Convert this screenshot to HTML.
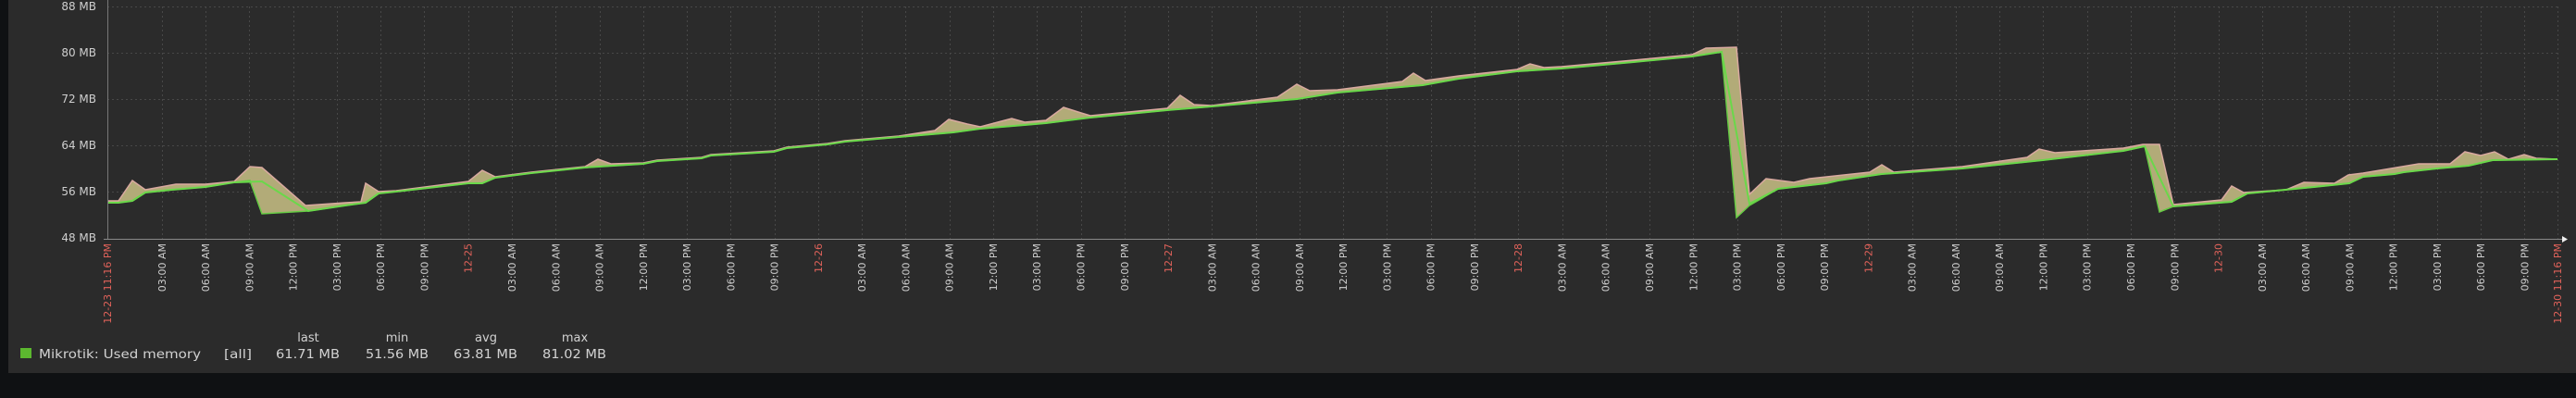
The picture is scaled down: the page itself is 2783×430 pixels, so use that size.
<!DOCTYPE html>
<html><head><meta charset="utf-8"><style>
html,body{margin:0;padding:0;background:#0f1113;width:2783px;height:430px;overflow:hidden}
svg{display:block}
text{font-family:"DejaVu Sans","Liberation Sans",sans-serif}
</style></head><body>
<svg id="g" width="2783" height="430" xmlns="http://www.w3.org/2000/svg">
<rect x="0" y="0" width="2783" height="430" fill="#0f1113"/>
<rect x="9" y="0" width="2774" height="403" fill="#2b2b2b"/>
<g id="grid" stroke="#484848" stroke-width="1" stroke-dasharray="2,3">
<line x1="116" y1="7.5" x2="2763" y2="7.5"/>
<line x1="116" y1="57.5" x2="2763" y2="57.5"/>
<line x1="116" y1="107.5" x2="2763" y2="107.5"/>
<line x1="116" y1="157.5" x2="2763" y2="157.5"/>
<line x1="116" y1="207.5" x2="2763" y2="207.5"/>
</g>
<g fill="#cfcfcf" font-size="12" text-anchor="end">
<text x="104" y="11">88 MB</text>
<text x="104" y="61">80 MB</text>
<text x="104" y="111">72 MB</text>
<text x="104" y="161">64 MB</text>
<text x="104" y="211">56 MB</text>
<text x="104" y="261">48 MB</text>
</g>
<polygon id="fill" fill="#b2ab78" stroke="none"/>
<polyline id="maxl" fill="none" stroke="#d9a9a0" stroke-width="1.5"/>
<polyline id="minl" fill="none" stroke="#66cc44" stroke-width="1.5"/>
<polyline id="avgl" fill="none" stroke="#6ad84a" stroke-width="2"/>
<line x1="116.5" y1="0" x2="116.5" y2="258" stroke="#777" stroke-width="1"/>
<line x1="112" y1="258.5" x2="2768" y2="258.5" stroke="#888" stroke-width="1"/>
<polygon points="2768,255 2774,258.5 2768,262" fill="#eee"/>
<g id="labels" font-size="11"></g>
<rect x="22" y="376" width="12" height="11" fill="#5cb82f"/>
<g fill="#d2d2d2" font-size="13">
<text x="42" y="387" textLength="175" lengthAdjust="spacingAndGlyphs">Mikrotik: Used memory</text>
<text x="242" y="387" textLength="30" lengthAdjust="spacingAndGlyphs">[all]</text>
<text x="298" y="387" textLength="69" lengthAdjust="spacingAndGlyphs">61.71 MB</text>
<text x="395" y="387" textLength="68" lengthAdjust="spacingAndGlyphs">51.56 MB</text>
<text x="490" y="387" textLength="69" lengthAdjust="spacingAndGlyphs">63.81 MB</text>
<text x="586" y="387" textLength="69" lengthAdjust="spacingAndGlyphs">81.02 MB</text>
<g text-anchor="middle">
<text x="333" y="369">last</text>
<text x="429" y="369">min</text>
<text x="525" y="369">avg</text>
<text x="621" y="369">max</text>
</g>
</g>
</svg>
<script>
(function(){
var NS="http://www.w3.org/2000/svg";
var avg=[[116,219],[128,219],[143,217],[157,208],[186,205],[222,202],[253,197],[283,196],[333,228],[373,222],[395,219],[409,209],[428,207],[506,198],[521,198],[535,192],[574,187],[632,181],[695,177],[710,174],[758,171],[768,168],[836,164],[850,160],[894,156],[913,153],[971,148],[1030,143],[1059,139],[1107,135],[1130,133],[1178,127],[1261,119],[1309,115],[1401,107],[1445,100],[1537,92],[1576,85],[1639,77],[1687,74],[1765,67],[1828,61],[1860,56],[1890,220],[1921,204],[1973,198],[1986,195],[2033,188],[2120,182],[2207,173],[2294,163],[2317,158],[2348,223],[2411,218],[2428,209],[2500,202],[2538,198],[2553,191],[2587,188],[2597,186],[2633,182],[2667,179],[2693,173],[2763,172]];
var mx=[[116,217],[128,217],[143,195],[157,205],[190,199],[222,199],[253,196],[270,180],[283,181],[330,222],[373,219],[390,218],[395,198],[409,207],[428,206],[506,196],[521,184],[535,191],[574,186],[632,180],[646,172],[660,177],[695,176],[710,173],[758,170],[768,167],[836,163],[850,159],[894,155],[913,152],[971,147],[1010,141],[1025,129],[1045,134],[1059,137],[1093,128],[1107,132],[1130,130],[1149,116],[1168,122],[1178,125],[1261,117],[1275,103],[1290,113],[1309,114],[1380,105],[1401,91],[1415,98],[1445,97],[1515,88],[1527,79],[1540,87],[1576,82],[1639,75],[1653,69],[1668,73],[1687,72],[1765,65],[1828,59],[1843,52],[1876,51],[1890,210],[1908,193],[1938,197],[1955,193],[2020,186],[2033,178],[2046,186],[2120,180],[2190,170],[2203,161],[2220,165],[2294,160],[2315,156],[2333,156],[2348,221],[2400,216],[2411,201],[2424,208],[2470,205],[2489,197],[2522,198],[2537,189],[2553,187],[2613,177],[2647,177],[2663,164],[2680,168],[2695,164],[2710,172],[2727,167],[2740,171],[2763,172]];
var mn=[];
avg.forEach(function(p){
 if(p[0]==283){mn.push([270,195]);mn.push([283,231]);return;}
 if(p[0]==1890){mn.push([1876,235]);mn.push([1890,222]);return;}
 if(p[0]==2348){mn.push([2333,229]);mn.push([2348,223]);return;}
 mn.push(p);
});
function s(a){return a.map(function(p){return p[0]+","+p[1]}).join(" ");}
document.getElementById("maxl").setAttribute("points",s(mx));
document.getElementById("minl").setAttribute("points",s(mn));
document.getElementById("avgl").setAttribute("points",s(avg));
document.getElementById("fill").setAttribute("points",s(mx)+" "+s(mn.slice().reverse()));
var grid=document.getElementById("grid"),lab=document.getElementById("labels");
function txt(x,str,col){var t=document.createElementNS(NS,"text");t.setAttribute("transform","translate("+x+",263) rotate(-90)");t.setAttribute("text-anchor","end");t.setAttribute("dy","0.36em");t.setAttribute("fill",col);t.textContent=str;lab.appendChild(t);}
var x0=127.6,step=47.27;
for(var n=0;n<=55;n++){
 var x=x0+step*n;
 if(n>0){var l=document.createElementNS(NS,"line");var xx=Math.round(x)+0.5;l.setAttribute("x1",xx);l.setAttribute("x2",xx);l.setAttribute("y1",7);l.setAttribute("y2",258);grid.appendChild(l);}
 var h=(n*3)%24,day=24+Math.floor(n*3/24);
 if(n==0)continue;
 if(h==0){txt(x,"12-"+day,"#e0625a");}
 else{var hh=h%12;if(hh==0)hh=12;txt(x,(hh<10?"0":"")+hh+":00 "+(h<12?"AM":"PM"),"#cfcfcf");}
}
var l2=document.createElementNS(NS,"line");l2.setAttribute("x1",2763.5);l2.setAttribute("x2",2763.5);l2.setAttribute("y1",7);l2.setAttribute("y2",258);grid.appendChild(l2);
txt(116,"12-23 11:16 PM","#e0625a");
txt(2763,"12-30 11:16 PM","#e0625a");
})();
</script>
</body></html>
